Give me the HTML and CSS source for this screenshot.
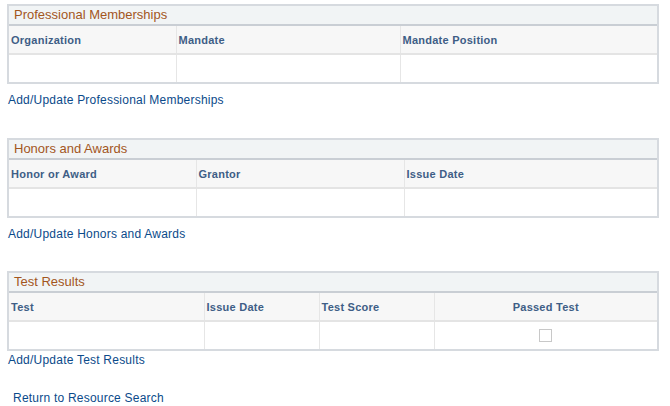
FILE: index.html
```html
<!DOCTYPE html>
<html lang="en">
<head>
  <meta charset="UTF-8" />
  <title>Resource Qualifications</title>
  <link rel="stylesheet" href="styles.css">
</head>
<body>

  <!-- Professional Memberships -->
  <div class="grid first">
    <div class="grid-title">Professional Memberships</div>
    <table>
      <colgroup><col style="width:167px"><col style="width:224px"><col></colgroup>
      <tr><th>Organization</th><th>Mandate</th><th>Mandate Position</th></tr>
      <tr><td></td><td></td><td></td></tr>
    </table>
  </div>
  <a class="link" href="#">Add/Update Professional Memberships</a>

  <!-- Honors and Awards -->
  <div class="grid">
    <div class="grid-title">Honors and Awards</div>
    <table>
      <colgroup><col style="width:187px"><col style="width:208px"><col></colgroup>
      <tr><th>Honor or Award</th><th>Grantor</th><th>Issue Date</th></tr>
      <tr><td></td><td></td><td></td></tr>
    </table>
  </div>
  <a class="link" href="#">Add/Update Honors and Awards</a>

  <!-- Test Results -->
  <div class="grid tight">
    <div class="grid-title">Test Results</div>
    <table>
      <colgroup><col style="width:195px"><col style="width:115px"><col style="width:115px"><col></colgroup>
      <tr><th>Test</th><th>Issue Date</th><th>Test Score</th><th class="center">Passed Test</th></tr>
      <tr><td></td><td></td><td></td><td class="center"><span class="check"></span></td></tr>
    </table>
  </div>
  <a class="link" href="#">Add/Update Test Results</a>

  <a class="link back" href="#">Return to Resource Search</a>

</body>
</html>
```

FILE: styles.css
```css
* { box-sizing: border-box; }

body {
  margin: 0;
  font-family: "Liberation Sans", Arial, sans-serif;
  background: #ffffff;
}

.grid {
  width: 652px;
  margin: 30px 0 0 7px;
  border: 2px solid #d6dadf;
}

.grid.first { margin-top: 4px; }
.grid.tight { margin-top: 29px; }

.grid-title {
  height: 20px;
  line-height: 18px;
  padding-left: 5px;
  font-size: 13px;
  color: #a3561d;
  background: #f1f4f5;
  border-bottom: 2px solid #c9ced4;
}

table {
  width: 100%;
  border-collapse: collapse;
  table-layout: fixed;
}

th {
  height: 28px;
  padding: 0 2px;
  text-align: left;
  font-size: 11px;
  font-weight: bold;
  letter-spacing: 0.25px;
  color: #3e5e86;
  background: #f7f7f7;
  border-bottom: 2px solid #e4e4e4;
  border-left: 1px solid #e6e6e6;
}

td {
  height: 28px;
  padding: 0 2px;
  background: #ffffff;
  border-left: 1px solid #e6e6e6;
}

th:first-child, td:first-child { border-left: none; }

.center { text-align: center; }

.check {
  display: inline-block;
  width: 13px;
  height: 13px;
  margin-bottom: 2px;
  border: 1px solid #c8c8c8;
  background: #fff;
  vertical-align: middle;
}

.link {
  display: block;
  margin: 8px 0 0 8px;
  font-size: 12px;
  line-height: 16px;
  letter-spacing: 0.22px;
  color: #0b4a8a;
  text-decoration: none;
}

.grid.tight + .link { margin-top: 1px; }

.link.back {
  margin: 22px 0 0 13px;
}
```
